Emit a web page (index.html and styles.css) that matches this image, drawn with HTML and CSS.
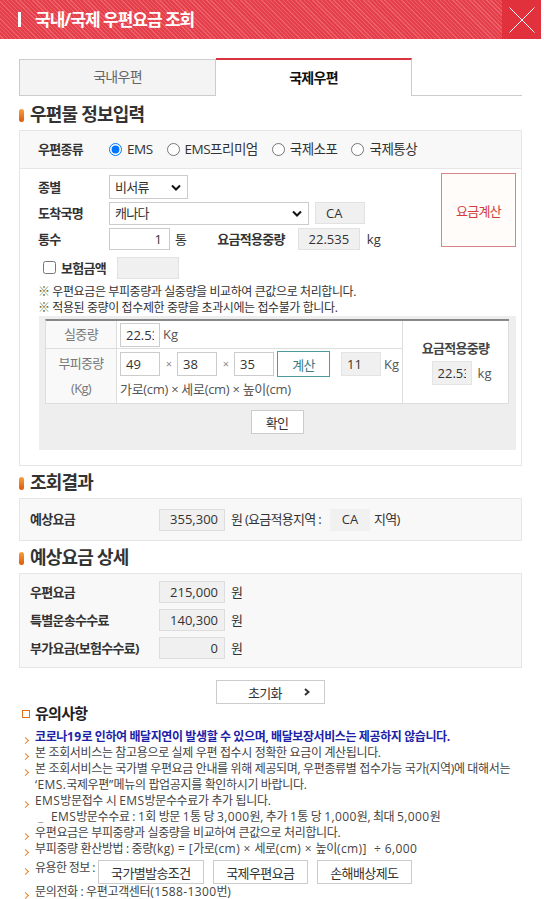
FILE: index.html
```html
<!DOCTYPE html>
<html lang="ko">
<head>
<meta charset="utf-8">
<title>국내/국제 우편요금 조회</title>
<link rel="stylesheet" href="styles.css">
</head>
<body>
<header class="top">
  <span class="top-mark"></span>
  <h1 class="top-title">국내/국제 우편요금 조회</h1>
  <button class="top-close" type="button" aria-label="닫기">
    <svg width="26" height="26" viewBox="0 0 26 26"><path d="M0.5 0.5L25.5 25.5M25.5 0.5L0.5 25.5" stroke="#fff" stroke-width="1" fill="none"/></svg>
  </button>
</header>
<main class="page">
  <nav class="tabs">
    <a class="tab tab-off">국내우편</a>
    <a class="tab tab-on">국제우편</a>
    <span class="tab-fill"></span>
  </nav>

  <h2 class="sec-title sec-first"><span class="sec-icon"></span>우편물 정보입력</h2>
  <section class="box">
    <div class="kind-row">
      <span class="kind-label">우편종류</span>
      <label class="radio"><input type="radio" name="kind" checked>EMS</label>
      <label class="radio"><input type="radio" name="kind">EMS프리미엄</label>
      <label class="radio"><input type="radio" name="kind">국제소포</label>
      <label class="radio"><input type="radio" name="kind">국제통상</label>
    </div>
    <div class="input-body">
      <div class="input-top">
        <div class="fields">
          <div class="frow">
            <span class="flabel">종별</span>
            <div class="fselect w-kind"><span>비서류</span><svg width="10" height="7" viewBox="0 0 10 7"><path d="M1 1.5L5 5.5L9 1.5" stroke="#111" stroke-width="2" fill="none"/></svg></div>
          </div>
          <div class="frow">
            <span class="flabel">도착국명</span>
            <div class="fselect w-country"><span>캐나다</span><svg width="10" height="7" viewBox="0 0 10 7"><path d="M1 1.5L5 5.5L9 1.5" stroke="#111" stroke-width="2" fill="none"/></svg></div>
            <span class="rbox w-ca">CA</span>
          </div>
          <div class="frow">
            <span class="flabel">통수</span>
            <input class="tinput w-cnt" type="text" value="1">
            <span class="unit">통</span>
            <span class="flabel2">요금적용중량</span>
            <span class="rbox w-wt">22.535</span>
            <span class="unit unit-kg">kg</span>
          </div>
          <div class="frow frow-ins">
            <label class="chk"><input type="checkbox">보험금액</label>
            <span class="rbox w-ins"></span>
          </div>
        </div>
        <button class="calc-btn" type="button">요금계산</button>
      </div>
      <div class="warns">
        <p class="warn"><span class="mark">※</span> 우편요금은 부피중량과 실중량을 비교하여 큰값으로 처리합니다.</p>
        <p class="warn"><span class="mark">※</span> 적용된 중량이 접수제한 중량을 초과시에는 접수불가 합니다.</p>
      </div>
      <div class="vol-wrap">
        <div class="vol">
          <div class="vc vh r1">실중량</div>
          <div class="vc v2 r1"><input class="num" type="text" value="22.535"><span class="kg">Kg</span></div>
          <div class="vc v3">
            <div class="res-title">요금적용중량</div>
            <div class="res-line"><input class="num ro" type="text" value="22.535" readonly><span class="kg2">kg</span></div>
          </div>
          <div class="vc vh r2">부피중량<br>(Kg)</div>
          <div class="vc v2 r2">
            <div class="dims">
              <input class="num" type="text" value="49"><span class="x">×</span>
              <input class="num" type="text" value="38"><span class="x">×</span>
              <input class="num" type="text" value="35">
              <button class="calc2" type="button">계산</button>
              <input class="num ro num-res" type="text" value="11" readonly><span class="kg">Kg</span>
            </div>
            <div class="dims-help">가로(cm) × 세로(cm) × 높이(cm)</div>
          </div>
        </div>
        <button class="ok-btn" type="button">확인</button>
      </div>
    </div>
  </section>

  <h2 class="sec-title"><span class="sec-icon"></span>조회결과</h2>
  <section class="box box-gray result">
    <div class="rrow">
      <span class="rlabel">예상요금</span>
      <span class="rbox amount">355,300</span>
      <span class="after">원 (요금적용지역 :</span>
      <span class="zone">CA</span>
      <span class="after2">지역)</span>
    </div>
  </section>

  <h2 class="sec-title"><span class="sec-icon"></span>예상요금 상세</h2>
  <section class="box box-gray detail">
    <div class="rrow"><span class="rlabel">우편요금</span><span class="rbox amount">215,000</span><span class="after">원</span></div>
    <div class="rrow"><span class="rlabel">특별운송수수료</span><span class="rbox amount">140,300</span><span class="after">원</span></div>
    <div class="rrow"><span class="rlabel">부가요금(보험수수료)</span><span class="rbox amount">0</span><span class="after">원</span></div>
  </section>

  <div class="reset-wrap">
    <button class="reset-btn" type="button"><span>초기화</span><svg width="6" height="8" viewBox="0 0 6 8"><path d="M1 1L4.5 4L1 7" stroke="#333" stroke-width="2" fill="none"/></svg></button>
  </div>

  <h3 class="notice-title"><span class="sq"></span>유의사항</h3>
  <ul class="notice">
    <li class="blue"><span>코로나<span class="en">19</span>로 인하여 배달지연이 발생할 수 있으며, 배달보장서비스는 제공하지 않습니다.</span></li>
    <li>본 조회서비스는 참고용으로 실제 우편 접수시 정확한 요금이 계산됩니다.</li>
    <li><span>본 조회서비스는 국가별 우편요금 안내를 위해 제공되며, 우편종류별 접수가능 국가(지역)에 대해서는<br><span class="en">‘EMS.</span>국제우편<span class="en">”</span>메뉴의 팝업공지를 확인하시기 바랍니다.</span></li>
    <li><span><span class="en">EMS</span>방문접수 시 <span class="en">EMS</span>방문수수료가 추가 됩니다.</span></li>
    <li class="sub"><span class="dash">_</span><span><span class="en">EMS</span>방문수수료 : <span class="en">1</span>회 방문 <span class="en">1</span>통 당 <span class="en">3,000</span>원, 추가 <span class="en">1</span>통 당 <span class="en">1,000</span>원, 최대 <span class="en">5,000</span>원</span></li>
    <li>우편요금은 부피중량과 실중량을 비교하여 큰값으로 처리합니다.</li>
    <li><span>부피중량 환산방법 : 중량<span class="en">(kg) = [</span>가로<span class="en">(cm) × </span>세로<span class="en">(cm) × </span>높이<span class="en">(cm)]&nbsp; ÷ 6,000</span></span></li>
    <li class="links"><span>유용한 정보 :</span>
      <button class="info-btn w1" type="button">국가별발송조건</button>
      <button class="info-btn" type="button">국제우편요금</button>
      <button class="info-btn" type="button">손해배상제도</button>
    </li>
    <li><span>문의전화 : 우편고객센터<span class="en">(1588-1300</span>번<span class="en">)</span></span></li>
  </ul>
</main>
</body>
</html>
```

FILE: styles.css
```css
* { box-sizing: border-box; }
html, body { margin: 0; padding: 0; }
body {
  width: 544px;
  background: #fff;
  font-family: "Open Sans", "Noto Sans CJK KR", sans-serif;
  font-size: 13px;
  line-height: 1.3;
  color: #333;
  letter-spacing: -0.7px;
}
button, input { font-family: inherit; letter-spacing: inherit; }

/* header */
.top {
  display: flex;
  align-items: center;
  width: 541px;
  height: 39px;
  background: repeating-linear-gradient(45deg, #e4404b 0px, #e4404b 2px, #ef5f69 2px, #ef5f69 3px);
}
.top-mark { width: 3px; height: 15px; background: #fff; margin-left: 18px; }
.top-title {
  margin: 0 0 0 14px;
  font-size: 17px;
  font-weight: bold;
  line-height: 20px;
  letter-spacing: -1px;
  color: #fff;
}
.top-close {
  margin-left: auto;
  width: 39px;
  height: 39px;
  padding: 0;
  border: 0;
  background: #e0313d;
  display: flex;
  align-items: center;
  justify-content: center;
}

.page { padding: 0 22px 0 19px; }

/* tabs */
.tabs { display: flex; align-items: flex-end; margin-top: 19px; height: 38px; }
.tab {
  display: flex;
  align-items: center;
  justify-content: center;
  font-size: 14px;
}
.tab-off { width: 197px; height: 37px; background: #f4f4f4; border: 1px solid #ccc; color: #666; }
.tab-on {
  width: 196px;
  height: 38px;
  border-top: 2px solid #d9333f;
  border-right: 1px solid #ccc;
  background: #fff;
  color: #111;
  font-weight: bold;
}
.tab-fill { flex: 1; height: 1px; background: #ccc; }

/* section titles */
.sec-title {
  display: flex;
  align-items: center;
  height: 22px;
  margin: 6px 0 4px;
  font-size: 18px;
  font-weight: bold;
  letter-spacing: -0.8px;
  color: #333;
}
.sec-first { margin-top: 8px; }
.sec-icon {
  width: 5px;
  height: 13px;
  border-radius: 3px;
  background: linear-gradient(#f5a040, #dd5a08);
  margin-right: 6px;
}

.box { border: 1px solid #e6e6e6; }
.box-gray { background: #f8f8f8; }

/* post kind row */
.kind-row {
  display: flex;
  align-items: center;
  height: 38px;
  padding-left: 18px;
  background: #f8f8f8;
  border-bottom: 1px solid #e6e6e6;
}
.kind-label { width: 71px; font-weight: bold; }
.radio { display: inline-flex; align-items: center; margin-right: 14px; font-size: 13.5px; letter-spacing: -0.5px; }
.radio input { margin: 0 5px 0 0; width: 13px; height: 13px; }

/* input body */
.input-body { padding: 4px 5px 15px 18px; }
.input-top { display: flex; align-items: flex-start; }
.fields { flex: 1; padding-top: 1px; }
.frow { display: flex; align-items: center; height: 26px; }
.frow-ins { margin-top: 3px; }
.flabel { width: 71px; font-weight: bold; }
.fselect {
  display: flex;
  align-items: center;
  justify-content: space-between;
  background: #fff;
  border: 1px solid #ccc;
  padding: 0 6px 0 5px;
}
.w-kind { width: 79px; height: 24px; }
.w-country { width: 200px; height: 23px; }
.rbox {
  display: inline-flex;
  align-items: center;
  height: 22px;
  background: #f0f0f0;
  border: 1px solid #e2e2e2;
  letter-spacing: 0;
}
.w-ca { width: 50px; margin-left: 6px; padding-left: 10px; }
.tinput {
  width: 61px;
  height: 22px;
  border: 1px solid #ccc;
  padding: 0 7px;
  text-align: right;
  font-size: 13px;
  color: #333;
  letter-spacing: 0;
}
.unit { margin-left: 5px; }
.flabel2 { font-weight: bold; margin-left: 31px; }
.w-wt { width: 62px; margin-left: 13px; justify-content: center; }
.unit-kg { margin-left: 7px; letter-spacing: 0; }
.chk { display: inline-flex; align-items: center; font-weight: bold; }
.chk input { margin: 0 5px 0 5px; width: 13px; height: 13px; }
.w-ins { width: 62px; margin-left: 11px; }
.calc-btn {
  width: 75px;
  height: 74px;
  padding: 0;
  border: 1px solid #d98585;
  background: #fffcfa;
  color: #d23c3c;
  font-size: 13px;
}
.warns { margin-top: 3px; }
.warn { margin: 0; font-size: 12px; line-height: 16px; letter-spacing: -0.4px; color: #333; }
.mark { color: #66702a; }

/* volume table */
.vol-wrap {
  margin-left: 1px;
  background: #eee;
  padding: 3px 7px 16px 6px;
}
.vol {
  display: grid;
  grid-template-columns: 71px 286px 106px;
  grid-template-rows: 28px 55px;
  border-top: 2px solid #888;
  border-left: 1px solid #ddd;
  background: #fff;
}
.vc { border-right: 1px solid #ddd; border-bottom: 1px solid #ddd; }
.vh {
  display: flex;
  align-items: center;
  justify-content: center;
  text-align: center;
  background: #f9f9f9;
  color: #777;
  font-size: 13px;
  line-height: 25px;
}
.v2.r1 { display: flex; align-items: center; padding-left: 3px; }
.v2.r2 { padding: 2px 0 0 3px; }
.v3 {
  grid-column: 3;
  grid-row: 1 / 3;
  display: flex;
  flex-direction: column;
  justify-content: center;
  align-items: center;
}
.num {
  width: 40px;
  height: 24px;
  border: 1px solid #ccc;
  padding: 0 5px;
  font-size: 13px;
  color: #333;
  letter-spacing: 0;
  background: #fff;
}
.num.ro { background: #f0f0f0; border-color: #e4e4e4; }
.kg { margin-left: 3px; color: #555; letter-spacing: 0; }
.dims { display: flex; align-items: center; height: 26px; }
.x { width: 17px; text-align: center; color: #888; font-size: 11px; }
.calc2 {
  width: 53px;
  height: 26px;
  margin-left: 3px;
  padding: 0;
  border: 1px solid #4f9b9b;
  background: #fff;
  color: #3c7c7e;
  font-size: 13px;
}
.num-res { margin-left: 11px; }
.dims-help { margin-top: 2px; line-height: 20px; color: #555; white-space: nowrap; letter-spacing: -0.3px; }
.res-title { font-weight: bold; color: #444; line-height: 18px; }
.res-line { display: flex; justify-content: center; align-items: center; margin-top: 4px; padding-left: 12px; }
.kg2 { margin-left: 6px; color: #555; letter-spacing: 0; }
.ok-btn {
  display: block;
  width: 53px;
  height: 24px;
  margin: 6px auto 0;
  padding: 0;
  border: 1px solid #ccc;
  background: #fff;
  color: #333;
  font-size: 13px;
}

/* result boxes */
.result { height: 43px; display: flex; align-items: center; }
.rrow { display: flex; align-items: center; height: 28px; padding-left: 10px; }
.rlabel { width: 129px; font-weight: bold; }
.amount { width: 66px; justify-content: flex-end; padding-right: 6px; border-color: #ddd; }
.after { margin-left: 6px; }
.zone {
  display: inline-flex;
  align-items: center;
  justify-content: center;
  width: 40px;
  height: 22px;
  margin-left: 9px;
  background: #f1f1f1;
  letter-spacing: 0;
}
.after2 { margin-left: 4px; }
.detail { padding: 4px 0 5px; }

.reset-wrap { display: flex; justify-content: center; margin-top: 12px; }
.reset-btn {
  display: flex;
  align-items: center;
  width: 109px;
  height: 24px;
  padding: 0 0 0 31px;
  border: 1px solid #ccc;
  background: #fff;
  color: #333;
  font-size: 13px;
}
.reset-btn svg { margin-left: 22px; }

/* notice */
.notice-title {
  display: flex;
  align-items: center;
  height: 16px;
  margin: 2px 0 0;
  font-size: 15px;
  font-weight: bold;
  color: #222;
}
.sq {
  width: 8px;
  height: 8px;
  border: 1.5px solid #e0701a;
  margin: 0 5px 0 3px;
}
.notice {
  list-style: none;
  margin: 7px 0 0;
  padding: 0;
  font-size: 12px;
  line-height: 16px;
  letter-spacing: -0.35px;
  color: #444;
}
.notice .en { letter-spacing: 0.4px; }
.notice li { display: flex; align-items: flex-start; white-space: nowrap; }
.notice li::before {
  content: "";
  flex: none;
  width: 4px;
  height: 4px;
  border-top: 1.5px solid #e8842e;
  border-right: 1.5px solid #e8842e;
  transform: rotate(45deg);
  margin: 9px 7px 0 4px;
}
.notice li.blue { color: #1c22a8; font-weight: bold; letter-spacing: -0.4px; }
.notice li.sub::before { display: none; }
.notice li.sub { padding-left: 19px; }
.dash { color: #999; margin-right: 8px; }
.notice li.links { margin-top: 3px; letter-spacing: -0.6px; }
.info-btn {
  width: 95px;
  height: 24px;
  margin-left: 9px;
  padding: 0;
  border: 1px solid #ccc;
  background: #fff;
  color: #333;
  font-size: 13px;
}
.info-btn.w1 { width: 106px; margin-left: 3px; }
```
